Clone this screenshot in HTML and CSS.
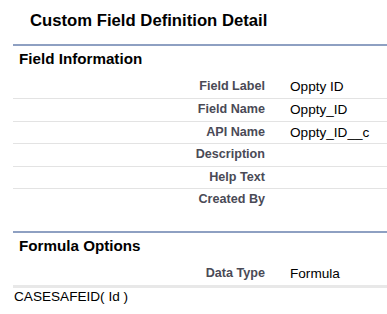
FILE: index.html
```html
<!DOCTYPE html>
<html>
<head>
<meta charset="utf-8">
<link rel="stylesheet" href="styles.css">
</head>
<body>
<div class="page">
  <h1 class="title">Custom Field Definition Detail</h1>
  <section class="block block-info">
    <h2 class="block-head">Field Information</h2>
    <div class="rows">
      <div class="row"><span class="label">Field Label</span><span class="value">Oppty ID</span></div>
      <div class="row"><span class="label">Field Name</span><span class="value">Oppty_ID</span></div>
      <div class="row"><span class="label">API Name</span><span class="value">Oppty_ID__c</span></div>
      <div class="row"><span class="label">Description</span><span class="value"></span></div>
      <div class="row"><span class="label">Help Text</span><span class="value"></span></div>
      <div class="row row-last"><span class="label">Created By</span><span class="value"></span></div>
    </div>
  </section>
  <section class="block block-formula">
    <h2 class="block-head">Formula Options</h2>
    <div class="rows rows-formula">
      <div class="row row-thick"><span class="label">Data Type</span><span class="value">Formula</span></div>
    </div>
    <div class="formula">CASESAFEID( Id )</div>
  </section>
</div>
</body>
</html>
```
FILE: styles.css
```css
html, body {
  margin: 0;
  padding: 0;
  background: #ffffff;
}

.page {
  font-family: "Liberation Sans", Arial, sans-serif;
  color: #000000;
  width: 387px;
}

.title {
  margin: 0;
  padding: 11px 0 13px 30px;
  font-size: 16.7px;
  line-height: 20px;
  font-weight: bold;
  color: #000000;
}

.block {
  margin-left: 13px;
  border-top: 2px solid #8ea0c2;
}

.block-head {
  margin: 3px 0 0 0;
  padding-left: 6px;
  font-size: 15.2px;
  line-height: 20px;
  font-weight: bold;
  color: #000000;
}

.rows {
  margin-top: 7.4px;
}

.block-info {
  padding-bottom: 19.6px;
}

.row {
  display: flex;
  line-height: 21.6px;
  height: 21.6px;
  border-bottom: 1px solid #e3e3e3;
}

.row-last {
  border-bottom: none;
}

.row-thick {
  border-bottom: 3px solid #e8e8e8;
}

.label {
  width: 252px;
  flex: none;
  text-align: right;
  font-size: 12.6px;
  font-weight: bold;
  color: #4a4a56;
}

.value {
  padding-left: 25px;
  font-size: 13.6px;
  color: #000000;
}

.formula {
  padding-left: 1px;
  font-size: 13.6px;
  line-height: 18px;
  color: #000000;
}
```
